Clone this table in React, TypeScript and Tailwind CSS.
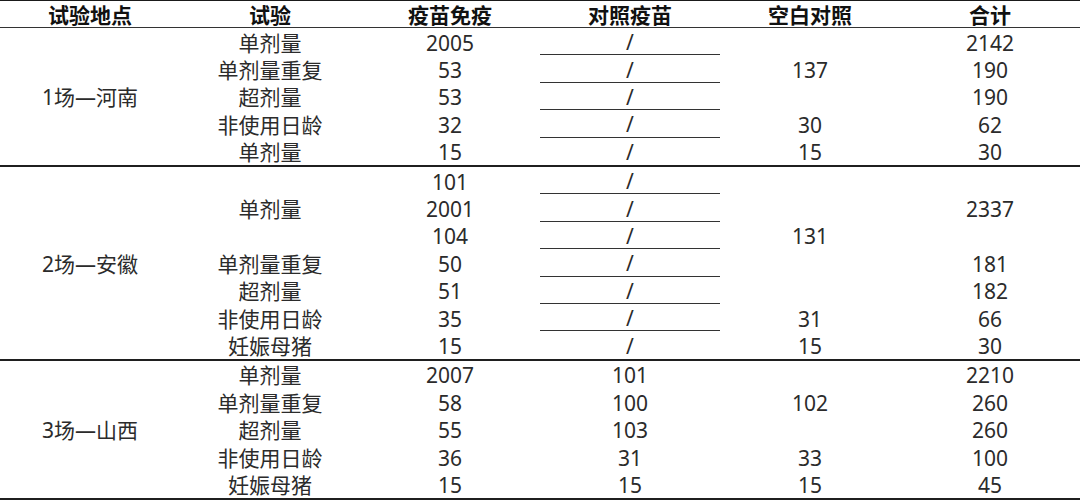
type Cell = { t: string; span?: number; line?: boolean };

const heights: Record<number, string> = {
  1: 'h-[27.4px]',
  3: 'h-[82.2px]',
  5: 'h-[137px]',
  7: 'h-[191.8px]',
};

type Section = { place: string; cols: Cell[][] };

const sections: Section[] = [
  {
    place: '1场—河南',
    cols: [
      [{ t: '单剂量' }, { t: '单剂量重复' }, { t: '超剂量' }, { t: '非使用日龄' }, { t: '单剂量' }],
      [{ t: '2005' }, { t: '53' }, { t: '53' }, { t: '32' }, { t: '15' }],
      [
        { t: '/', line: true },
        { t: '/', line: true },
        { t: '/', line: true },
        { t: '/', line: true },
        { t: '/' },
      ],
      [{ t: '137', span: 3 }, { t: '30' }, { t: '15' }],
      [{ t: '2142' }, { t: '190' }, { t: '190' }, { t: '62' }, { t: '30' }],
    ],
  },
  {
    place: '2场—安徽',
    cols: [
      [{ t: '单剂量', span: 3 }, { t: '单剂量重复' }, { t: '超剂量' }, { t: '非使用日龄' }, { t: '妊娠母猪' }],
      [{ t: '101' }, { t: '2001' }, { t: '104' }, { t: '50' }, { t: '51' }, { t: '35' }, { t: '15' }],
      [
        { t: '/', line: true },
        { t: '/', line: true },
        { t: '/', line: true },
        { t: '/', line: true },
        { t: '/', line: true },
        { t: '/', line: true },
        { t: '/' },
      ],
      [{ t: '131', span: 5 }, { t: '31' }, { t: '15' }],
      [{ t: '2337', span: 3 }, { t: '181' }, { t: '182' }, { t: '66' }, { t: '30' }],
    ],
  },
  {
    place: '3场—山西',
    cols: [
      [{ t: '单剂量' }, { t: '单剂量重复' }, { t: '超剂量' }, { t: '非使用日龄' }, { t: '妊娠母猪' }],
      [{ t: '2007' }, { t: '58' }, { t: '55' }, { t: '36' }, { t: '15' }],
      [{ t: '101' }, { t: '100' }, { t: '103' }, { t: '31' }, { t: '15' }],
      [{ t: '102', span: 3 }, { t: '33' }, { t: '15' }],
      [{ t: '2210' }, { t: '260' }, { t: '260' }, { t: '100' }, { t: '45' }],
    ],
  },
];

const headers = ['试验地点', '试验', '疫苗免疫', '对照疫苗', '空白对照', '合计'];

export default function App() {
  return (
    <div
      className="w-[1080px] h-[500px] bg-white text-[#2b2b2b] text-[21px] leading-none"
      style={{ fontFamily: '"Noto Sans", "Noto Sans CJK SC", sans-serif' }}
    >
      <div className="border-t border-[#1a1a1a]" />
      <div className="grid grid-cols-6 h-[27px] border-b-[1.5px] border-[#333] font-bold text-[#111]">
        {headers.map((h) => (
          <div key={h} className="flex items-center justify-center pt-[3px]">
            {h}
          </div>
        ))}
      </div>
      {sections.map((s) => (
        <div key={s.place} className="grid grid-cols-6 border-b-2 border-[#1f1f1f]">
          <div className="flex items-center justify-center pt-[3px]">{s.place}</div>
          {s.cols.map((col, ci) => (
            <div key={ci} className="flex flex-col">
              {col.map((c, ri) => (
                <div
                  key={ri}
                  className={`flex items-center justify-center pt-[3px] ${heights[c.span ?? 1]} ${
                    c.line ? 'border-b-[1.5px] border-[#333]' : ''
                  }`}
                >
                  {c.t}
                </div>
              ))}
            </div>
          ))}
        </div>
      ))}
    </div>
  );
}
